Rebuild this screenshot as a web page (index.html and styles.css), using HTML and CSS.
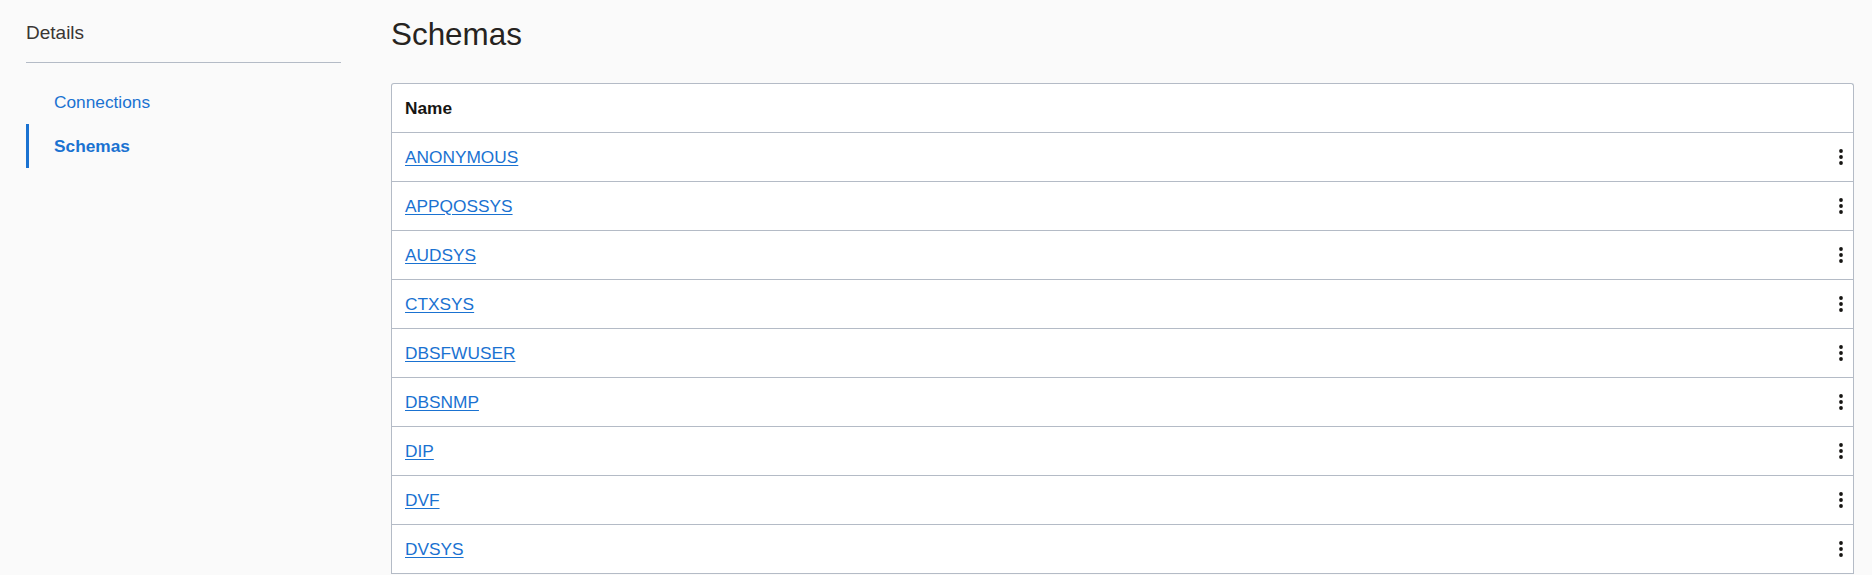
FILE: index.html
```html
<!DOCTYPE html>
<html lang="en">
<head>
<meta charset="utf-8">
<title>Schemas</title>
<link rel="stylesheet" href="styles.css">
</head>
<body>
<div class="layout">
  <aside class="sidebar">
    <div class="sidebar-title">Details</div>
    <nav class="nav">
      <a class="nav-item" href="#">Connections</a>
      <a class="nav-item active" href="#">Schemas</a>
    </nav>
  </aside>
  <main class="main">
    <h1 class="page-title">Schemas</h1>
    <div class="table">
      <div class="row head"><span class="cell-name">Name</span></div>
      <div class="row"><a class="cell-name link" href="#">ANONYMOUS</a><span class="kebab"><svg width="4" height="16" viewBox="0 0 4 16"><circle cx="2" cy="2" r="1.9"/><circle cx="2" cy="8" r="1.9"/><circle cx="2" cy="14" r="1.9"/></svg></span></div>
      <div class="row"><a class="cell-name link" href="#">APPQOSSYS</a><span class="kebab"><svg width="4" height="16" viewBox="0 0 4 16"><circle cx="2" cy="2" r="1.9"/><circle cx="2" cy="8" r="1.9"/><circle cx="2" cy="14" r="1.9"/></svg></span></div>
      <div class="row"><a class="cell-name link" href="#">AUDSYS</a><span class="kebab"><svg width="4" height="16" viewBox="0 0 4 16"><circle cx="2" cy="2" r="1.9"/><circle cx="2" cy="8" r="1.9"/><circle cx="2" cy="14" r="1.9"/></svg></span></div>
      <div class="row"><a class="cell-name link" href="#">CTXSYS</a><span class="kebab"><svg width="4" height="16" viewBox="0 0 4 16"><circle cx="2" cy="2" r="1.9"/><circle cx="2" cy="8" r="1.9"/><circle cx="2" cy="14" r="1.9"/></svg></span></div>
      <div class="row"><a class="cell-name link" href="#">DBSFWUSER</a><span class="kebab"><svg width="4" height="16" viewBox="0 0 4 16"><circle cx="2" cy="2" r="1.9"/><circle cx="2" cy="8" r="1.9"/><circle cx="2" cy="14" r="1.9"/></svg></span></div>
      <div class="row"><a class="cell-name link" href="#">DBSNMP</a><span class="kebab"><svg width="4" height="16" viewBox="0 0 4 16"><circle cx="2" cy="2" r="1.9"/><circle cx="2" cy="8" r="1.9"/><circle cx="2" cy="14" r="1.9"/></svg></span></div>
      <div class="row"><a class="cell-name link" href="#">DIP</a><span class="kebab"><svg width="4" height="16" viewBox="0 0 4 16"><circle cx="2" cy="2" r="1.9"/><circle cx="2" cy="8" r="1.9"/><circle cx="2" cy="14" r="1.9"/></svg></span></div>
      <div class="row"><a class="cell-name link" href="#">DVF</a><span class="kebab"><svg width="4" height="16" viewBox="0 0 4 16"><circle cx="2" cy="2" r="1.9"/><circle cx="2" cy="8" r="1.9"/><circle cx="2" cy="14" r="1.9"/></svg></span></div>
      <div class="row"><a class="cell-name link" href="#">DVSYS</a><span class="kebab"><svg width="4" height="16" viewBox="0 0 4 16"><circle cx="2" cy="2" r="1.9"/><circle cx="2" cy="8" r="1.9"/><circle cx="2" cy="14" r="1.9"/></svg></span></div>
    </div>
  </main>
</div>
</body>
</html>
```

FILE: styles.css
```css
html, body {
  margin: 0;
  padding: 0;
  background: #fafafa;
  font-family: "Liberation Sans", Arial, sans-serif;
  color: #161513;
}

.layout {
  display: flex;
  align-items: flex-start;
}

.sidebar {
  width: 315px;
  margin-left: 26px;
  flex: none;
}

.sidebar-title {
  font-size: 19px;
  line-height: 24px;
  padding: 21px 0 17px;
  border-bottom: 1px solid #b4bbc6;
  color: #3a3633;
}

.nav {
  display: flex;
  flex-direction: column;
  margin-top: 17px;
}

.nav-item {
  display: block;
  height: 44px;
  line-height: 44px;
  font-size: 17.3px;
  padding-left: 28px;
  color: #1a72d1;
  text-decoration: none;
}

.nav-item.active {
  border-left: 3px solid #1a72d1;
  padding-left: 25px;
  font-weight: bold;
}

.main {
  flex: 1;
  margin-left: 50px;
  margin-right: 18px;
}

.page-title {
  margin: 0;
  padding-top: 15px;
  font-size: 31.4px;
  line-height: 40px;
  font-weight: normal;
  color: #262320;
}

.table {
  margin-top: 28px;
  background: #fff;
  border: 1px solid #b4bbc6;
  border-bottom: none;
  border-radius: 3px 3px 0 0;
}

.row {
  display: flex;
  align-items: center;
  justify-content: space-between;
  height: 48px;
  padding: 0 10px 0 13px;
  border-bottom: 1px solid #b4bbc6;
  font-size: 17.3px;
}

.row.head {
  font-weight: bold;
  color: #161513;
}

.link {
  color: #1a72d1;
  text-decoration: underline;
  text-underline-offset: 2px;
}

.kebab {
  display: flex;
  width: 4px;
  height: 16px;
  fill: #161513;
}
```
